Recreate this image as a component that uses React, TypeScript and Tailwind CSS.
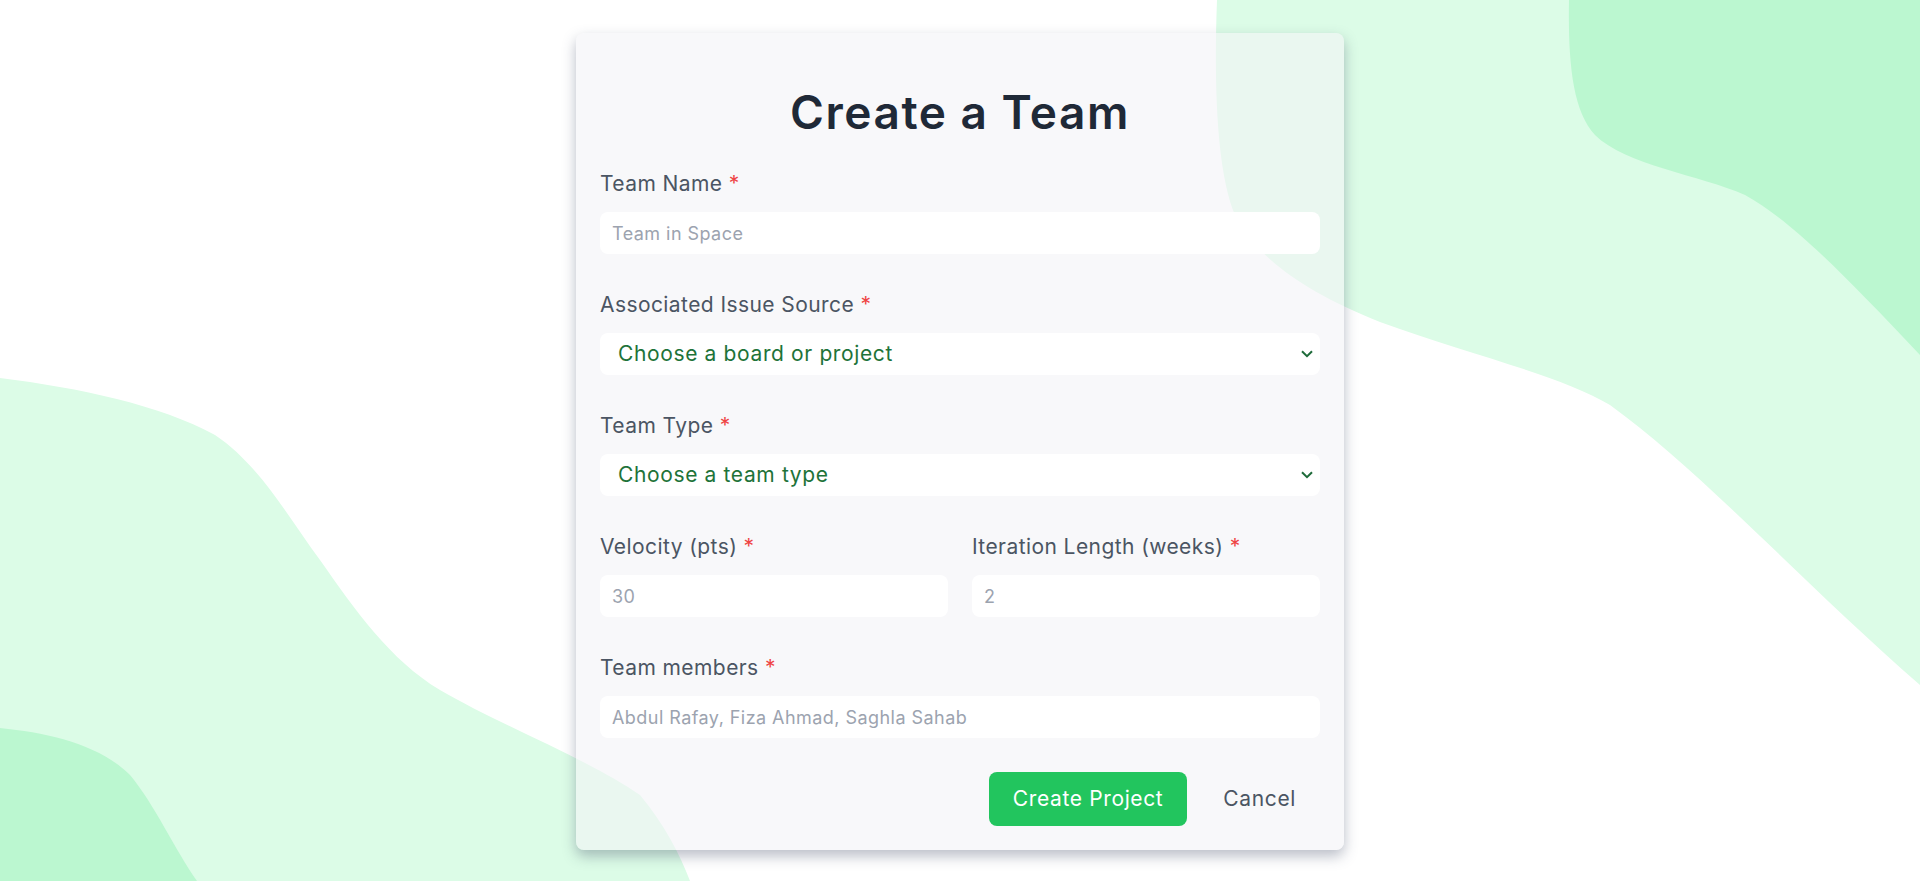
import React from "react";

const font = { fontFamily: "Inter, 'Noto Sans', sans-serif" };

function Label({ children }: { children: React.ReactNode }) {
    return (
        <label className="block mb-3.5 text-[21px] leading-7 tracking-[0.02em] text-[#4b5563]">
            {children} <span className="text-[#ef4444]">*</span>
        </label>
    );
}

function TextInput({ placeholder }: { placeholder: string }) {
    return (
        <input
            type="text"
            placeholder={placeholder}
            className="block w-full h-[42px] px-3 rounded-lg bg-white text-[18px] tracking-[0.025em] text-gray-700 placeholder:text-[#9ca3af] outline-none"
        />
    );
}

function Select({ text }: { text: string }) {
    return (
        <div className="relative">
            <select className="block w-full h-[42px] pl-[18px] pr-8 rounded-lg bg-white text-[21px] tracking-[0.03em] text-[#1e7339] appearance-none outline-none">
                <option>{text}</option>
            </select>
            {/* chevron */}
            <svg
                className="pointer-events-none absolute right-[7px] top-1/2 -translate-y-1/2"
                width="12"
                height="8"
                viewBox="0 0 12 8"
                fill="none"
            >
                <path d="M1 1.2 6 6.2 11 1.2" stroke="#1e6b3a" strokeWidth="2" />
            </svg>
        </div>
    );
}

export default function App() {
    return (
        <div className="relative min-h-screen w-full overflow-hidden bg-white" style={font}>
            {/* Background blobs */}
            <svg
                className="absolute inset-0 h-full w-full"
                viewBox="0 0 1920 881"
                preserveAspectRatio="none"
            >
                <path
                    d="M1217 0 C1214 80 1216 170 1235 215 C1255 255 1300 290 1380 322 C1470 355 1560 375 1610 405 C1700 470 1800 580 1920 685 L1920 0 Z"
                    fill="#dcfce7"
                />
                <path
                    d="M1569 0 C1568 60 1572 110 1595 135 C1625 165 1700 175 1745 195 C1790 220 1840 270 1920 355 L1920 0 Z"
                    fill="#bbf7d0"
                />
                <path
                    d="M0 378 C80 388 160 405 215 435 C260 465 290 520 320 560 C355 610 390 660 440 690 C500 725 590 760 640 795 C665 825 680 855 690 881 L0 881 Z"
                    fill="#dcfce7"
                />
                <path
                    d="M0 728 C50 733 100 745 130 775 C155 805 175 850 197 881 L0 881 Z"
                    fill="#bbf7d0"
                />
            </svg>

            <div className="relative flex justify-center pt-[33px]">
                <div className="w-[768px] rounded-lg bg-gray-100/60 px-6 pt-[56px] pb-6 shadow-[0_6px_14px_rgba(55,65,95,0.35)]">
                    <h1 className="mb-[35px] text-center text-[46px] font-semibold leading-none tracking-[0.033em] text-[#1f2937]">
                        Create a Team
                    </h1>

                    <div className="flex flex-col gap-[37px]">
                        <div>
                            <Label>Team Name</Label>
                            <TextInput placeholder="Team in Space" />
                        </div>
                        <div>
                            <Label>Associated Issue Source</Label>
                            <Select text="Choose a board or project" />
                        </div>
                        <div>
                            <Label>Team Type</Label>
                            <Select text="Choose a team type" />
                        </div>
                        <div className="grid grid-cols-2 gap-6">
                            <div>
                                <Label>Velocity (pts)</Label>
                                <TextInput placeholder="30" />
                            </div>
                            <div>
                                <Label>Iteration Length (weeks)</Label>
                                <TextInput placeholder="2" />
                            </div>
                        </div>
                        <div>
                            <Label>Team members</Label>
                            <TextInput placeholder="Abdul Rafay, Fiza Ahmad, Saghla Sahab" />
                        </div>
                    </div>

                    <div className="mt-[34px] flex justify-end gap-3">
                        <button className="h-[54px] rounded-lg bg-[#22c55e] px-6 text-[21px] tracking-[0.03em] text-white">
                            Create Project
                        </button>
                        <button className="h-[54px] px-6 text-[21px] tracking-[0.03em] text-[#4b5563]">
                            Cancel
                        </button>
                    </div>
                </div>
            </div>
        </div>
    );
}
